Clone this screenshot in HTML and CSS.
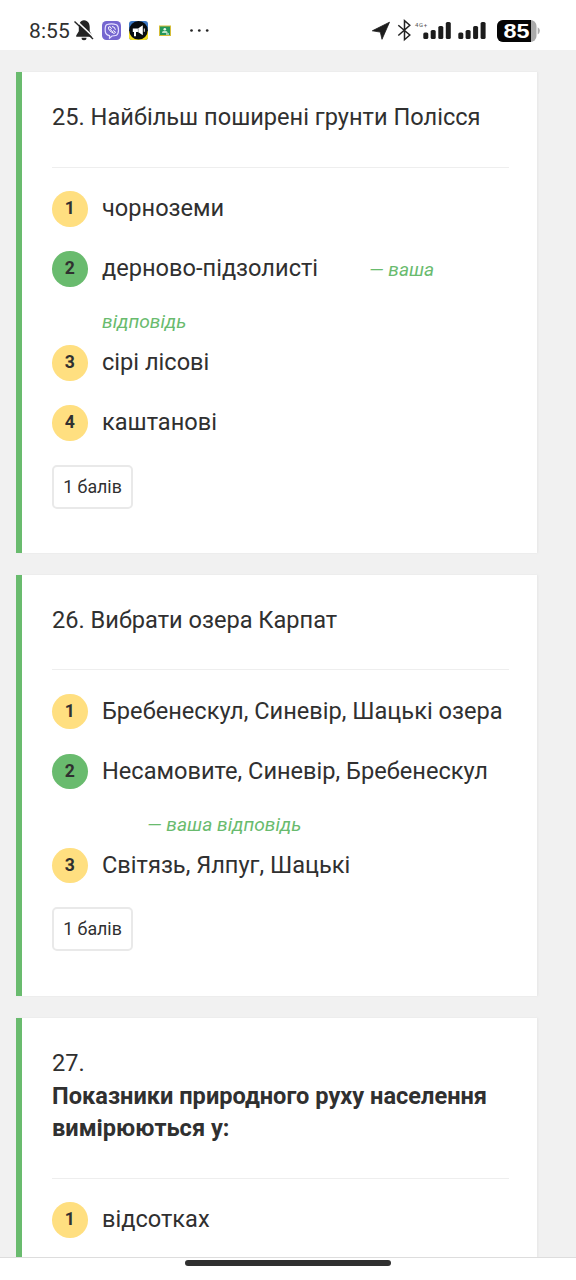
FILE: index.html
```html
<!DOCTYPE html>
<html lang="uk">
<head>
<meta charset="utf-8">
<title>Тест</title>
<link rel="stylesheet" href="styles.css">
</head>
<body>
<div class="screen">
  <header class="status">
    <span class="clock">8:55</span>
    <svg class="status-icons" width="150" height="30" viewBox="70 15 150 30">
      <path d="M84 20.2c-4 .6-5.2 3.6-5.2 7v4l-2.600 4.300v1.200h16v-1.200l-2.500-4.300v-4c0-3.600-1.500-6.400-5.700-7z" fill="#252525"/>
      <path d="M81.500 37.700h5a2.500 2.500 0 0 1-5 0z" fill="#252525"/>
      <path d="M76 20.300l18 17.200" stroke="#fff" stroke-width="1.600"/>
      <path d="M74.500 21.500l18.500 17.500" stroke="#252525" stroke-width="1.400"/>
      <rect x="102" y="21" width="19" height="19" rx="4.500" fill="#7566d0"/>
      <path d="M106.500 24.800q5-1.800 10 0 2 1.200 2 5.200t-2 5.200q-2.500.8-4.500.8l-2.500 2.200v-2.600q-3.700-.7-4.200-4-.5-5.300 1.200-6.800z" fill="none" stroke="#e6e1ff" stroke-width="1.200"/>
      <path d="M108.500 27.200q-.5 3.600 5.800 6.300l1.200-1.400-2-1.400-1 .8q-1.600-.8-2-2.200l.9-.7-1.300-2zM112 26.500q3.200.3 3.400 3.300" fill="none" stroke="#fff" stroke-width="1"/>
      <rect x="129" y="21" width="19" height="19" rx="3" fill="#3c78c4"/>
      <path d="M129 31h19v6q0 3-3 3h-13q-3 0-3-3z" fill="#f2dc22"/>
      <circle cx="138.500" cy="30.300" r="9.300" fill="#080c10"/>
      <path d="M132.800 28.500h5.200l4.800-3.300v10l-4.800-3.200h-2v4.200h-2v-4.200h-1.200z" fill="#fff"/>
      <path d="M138.300 28.400v3.700" stroke="#888" stroke-width=".7"/>
      <path d="M144.300 28.500v3.300" stroke="#eee" stroke-width="1"/>
      <rect x="159" y="25.500" width="12" height="10.500" fill="#d5bd38"/>
      <rect x="160" y="26.500" width="10" height="8.500" fill="#24975a"/>
      <circle cx="164.800" cy="29.200" r="1.300" fill="#e8f6e9"/>
      <path d="M162 33q0-2.200 2.800-2.200t2.800 2.200z" fill="#bce4c8"/>
      <path d="M166 34h3" stroke="#fff"/>
      <circle cx="191.500" cy="30.500" r="1.350" fill="#252525"/><circle cx="199.300" cy="30.500" r="1.350" fill="#252525"/><circle cx="207.200" cy="30.500" r="1.350" fill="#252525"/>
    </svg>
    <svg class="status-signal" width="206" height="30" viewBox="370 15 206 30">
      <path d="M389.500 22.200l-17.200 8.600 8 1.300 1.700 7.200z" fill="#1c1c1c" stroke="#1c1c1c" stroke-width=".8" stroke-linejoin="round"/>
      <path d="M398.300 25.200l11.500 9.800-5.300 4.700v-19l5.300 4.600-11.500 10.200" fill="none" stroke="#222" stroke-width="1.500"/>
      <text class="network" x="415" y="26.500">4G+</text>
      <g fill="#1c1c1c">
        <rect x="423.300" y="32.500" width="5" height="6.500" rx="1.600"/><rect x="430.700" y="30" width="5" height="9" rx="1.600"/><rect x="438.300" y="26" width="5" height="13" rx="1.600"/><rect x="445.800" y="22" width="5" height="17" rx="1.600"/>
        <rect x="458.300" y="32.500" width="5" height="6.500" rx="1.600"/><rect x="465.600" y="30" width="5" height="9" rx="1.600"/><rect x="473.100" y="26" width="5" height="13" rx="1.600"/><rect x="480.600" y="22" width="5" height="17" rx="1.600"/>
      </g>
      <rect x="497" y="20" width="39.500" height="22" rx="6" fill="#aaa"/>
      <path d="M503 20h28v22h-28a6 6 0 0 1-6-6v-10a6 6 0 0 1 6-6z" fill="#050505"/>
      <path d="M537.700 27.200q2.200 1.300 2.200 3.600t-2.200 3.600z" fill="#aaa"/>
      <text class="battery" x="503.500" y="37.800" textLength="26" lengthAdjust="spacingAndGlyphs">85</text>
    </svg>
  </header>

  <main class="page">
    <section class="card card-four">
      <h2 class="question">25. Найбільш поширені грунти Полісся</h2>
      <ol class="answers">
        <li class="answer"><span class="num">1</span><p class="label">чорноземи</p></li>
        <li class="answer chosen"><span class="num">2</span><p class="label">дерново-підзолисті <em class="mine">— ваша відповідь</em></p></li>
        <li class="answer"><span class="num">3</span><p class="label">сірі лісові</p></li>
        <li class="answer"><span class="num">4</span><p class="label">каштанові</p></li>
      </ol>
      <span class="points">1 балів</span>
    </section>

    <section class="card card-three">
      <h2 class="question">26. Вибрати озера Карпат</h2>
      <ol class="answers">
        <li class="answer"><span class="num">1</span><p class="label">Бребенескул, Синевір, Шацькі озера</p></li>
        <li class="answer chosen"><span class="num">2</span><p class="label">Несамовите, Синевір, Бребенескул <em class="mine">— ваша відповідь</em></p></li>
        <li class="answer"><span class="num">3</span><p class="label">Світязь, Ялпуг, Шацькі</p></li>
      </ol>
      <span class="points">1 балів</span>
    </section>

    <section class="card card-last">
      <h2 class="question">27.<br><b>Показники природного руху населення вимірюються у:</b></h2>
      <ol class="answers">
        <li class="answer"><span class="num">1</span><p class="label">відсотках</p></li>
      </ol>
    </section>
  </main>

  <footer class="navbar"><span class="handle"></span></footer>
</div>
</body>
</html>
```
FILE: styles.css
```css
* { box-sizing: border-box; }
body {
  margin: 0;
  background: #fff;
  color: #303030;
  font-family: Roboto, "Noto Sans", sans-serif;
}
.screen {
  display: flex;
  flex-direction: column;
  width: 576px;
  height: 1280px;
  overflow: hidden;
}
.status {
  display: flex;
  flex: none;
  height: 50px;
  padding: 15px 0 5px 29px;
  background: #fff;
}
.clock {
  width: 41px;
  font-size: 21px;
  line-height: 32px;
  letter-spacing: 0.1px;
  white-space: nowrap;
}
.status-icons, .status-signal { flex: none; }
.status-signal { margin-left: auto; }
.network { font-size: 6px; fill: #555; letter-spacing: 0.6px; }
.battery { font: bold 20px "Liberation Sans", sans-serif; fill: #fff; }

.page {
  display: flex;
  flex-direction: column;
  flex: none;
  gap: 22px;
  height: 1207px;
  padding: 22px 39px 0 16px;
  overflow: hidden;
  background: #f1f1f1;
}
.card {
  flex: none;
  padding: 29px 28px 0 30px;
  border-left: 6px solid #69bb6e;
  background: #fff;
  box-shadow: 1px 0 2px #e6e6e6;
}
.card-four { height: 480.500px; }
.card-three { height: 421.500px; }
.card-last { height: 300px; }
.question {
  margin: 0;
  padding-bottom: 33px;
  border-bottom: 1px solid #eee;
  font-size: 23.600px;
  font-weight: 400;
  line-height: 32.700px;
}
.question b { font-weight: 700; }
.answers {
  margin: 11.300px 0 0;
  padding: 0;
  list-style: none;
}
.answer {
  display: flex;
  gap: 14.500px;
  height: 60px;
  padding-top: 3px;
}
.chosen { height: 94px; }
.num {
  flex: none;
  width: 35.500px;
  height: 35.500px;
  margin-top: 9px;
  border-radius: 50%;
  background: #ffdf80;
  font-size: 17.600px;
  font-weight: 700;
  line-height: 35px;
  text-align: center;
}
.chosen .num { background: #69bb6e; }
.label {
  flex: none;
  width: 408px;
  margin: 0;
  font-size: 23.600px;
  line-height: 52px;
}
.mine {
  margin-left: 45px;
  color: #69bb6e;
  font-size: 19.200px;
  line-height: 1;
}
.points {
  display: block;
  width: 81px;
  height: 44px;
  margin-top: 11.500px;
  border: 2px solid #e9e9e9;
  border-radius: 5px;
  font-size: 17.800px;
  line-height: 40px;
  text-align: center;
  white-space: nowrap;
}
.navbar {
  display: flex;
  justify-content: center;
  flex: none;
  height: 23px;
  padding-top: 2px;
  border-top: 1px solid #ddd;
}
.handle {
  width: 206px;
  height: 6px;
  border-radius: 3px;
  background: #303030;
}
```
